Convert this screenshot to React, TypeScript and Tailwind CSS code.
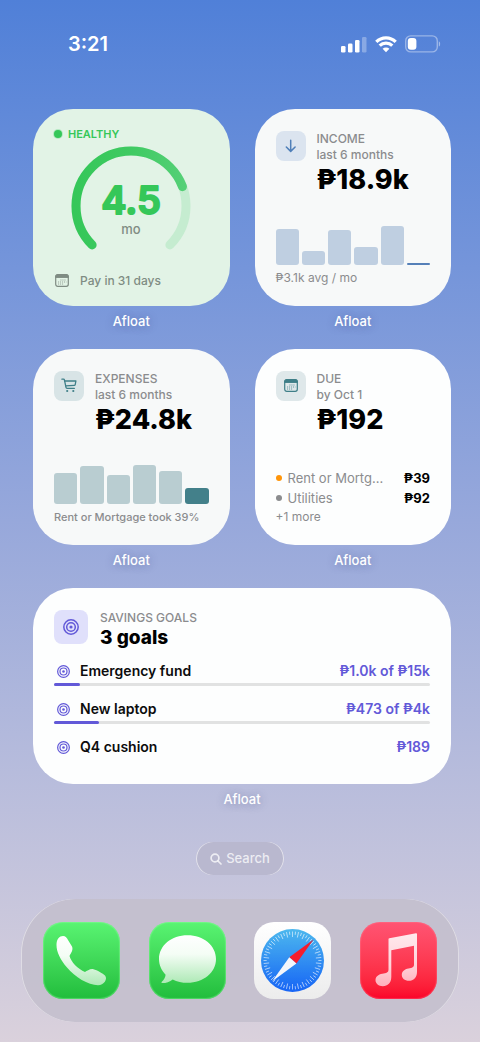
import React from "react";

type IconProps = { className?: string };

function SignalIcon() {
  return (
    <svg viewBox="0 0 26 17" className="h-[17px] w-[26px]" fill="#fff" aria-hidden="true">
      <rect x="0" y="10" width="4.5" height="6.5" rx="1.3" />
      <rect x="7" y="7.5" width="4.5" height="9" rx="1.3" />
      <rect x="14" y="4" width="4.5" height="12.5" rx="1.3" />
      <rect x="21" y="1" width="4.5" height="15.5" rx="1.3" opacity=".3" />
    </svg>
  );
}

function WifiIcon() {
  return (
    <svg viewBox="0 0 22 17" className="h-[17px] w-[22px]" fill="none" stroke="#fff" strokeWidth="3.2" aria-hidden="true">
      <path d="M1.300 5.900 A13.600 13.600 0 0 1 20.700 5.900" />
      <path d="M4.700 9.700 A8.900 8.900 0 0 1 17.300 9.700" />
      <path d="M11 16.200 L7.600 12.800 A4.800 4.800 0 0 1 14.400 12.800 Z" fill="#fff" stroke="none" />
    </svg>
  );
}

function BatteryIcon() {
  return (
    <svg viewBox="0 0 36 18" className="h-[18px] w-9" aria-hidden="true">
      <rect x=".7" y=".9" width="31.6" height="16" rx="5" fill="none" stroke="#fff" strokeOpacity=".4" strokeWidth="1.4" />
      <path d="M33.8 6.2 C35.6 6.8 35.6 11 33.8 11.6Z" fill="#fff" fillOpacity=".45" />
      <rect x="2.8" y="3" width="8.6" height="11.8" rx="3" fill="#fff" />
    </svg>
  );
}

function CalendarIcon({ className }: IconProps) {
  return (
    <svg viewBox="0 0 14 13" className={className} fill="none" stroke="currentColor" aria-hidden="true">
      <rect x=".7" y=".7" width="12.6" height="11.6" rx="2" strokeWidth="1.2" />
      <path d="M.7 3.4V2.7a2 2 0 0 1 2-2h8.6a2 2 0 0 1 2 2v.7z" fill="currentColor" strokeWidth="1" />
      <path d="M5.4 6h6M3 8h8.4M3 10h6" strokeWidth="1.1" strokeDasharray="1.1 .9" opacity=".75" />
    </svg>
  );
}

function ArrowDownIcon() {
  return (
    <svg viewBox="0 0 14 14" className="size-3.5" fill="none" stroke="#4f7fb8" strokeWidth="1.5" strokeLinecap="round" strokeLinejoin="round" aria-hidden="true">
      <path d="M6.700 1.300v11M2.300 8l4.400 4.400L11.100 8" />
    </svg>
  );
}

function CartIcon() {
  return (
    <svg viewBox="0 0 16 15" className="h-[15px] w-4" fill="none" stroke="#3f7f88" strokeWidth="1.3" strokeLinecap="round" strokeLinejoin="round" aria-hidden="true">
      <path d="M.9 1.200h1.600c.5 0 .8.200.9.700L5 9.400c.1.600.5.900 1 .9h7.400" />
      <path d="M3.700 3h11.200l-.7 3.600c-.1.500-.4.800-.9.800L4.700 7.900" />
      <circle cx="6.200" cy="13" r="1.100" fill="#3f7f88" stroke="none" />
      <circle cx="12.300" cy="13" r="1.100" fill="#3f7f88" stroke="none" />
    </svg>
  );
}

function TargetIcon({ className }: IconProps) {
  return (
    <svg viewBox="0 0 16 16" className={className} fill="none" stroke="#6259d8" strokeWidth="1.500" aria-hidden="true">
      <circle cx="8" cy="8" r="7.200" />
      <circle cx="8" cy="8" r="4.300" />
      <circle cx="8" cy="8" r="1.600" fill="#6259d8" stroke="none" />
    </svg>
  );
}

function Gauge() {
  const track = "M22.100 98.900 A55 55 0 1 1 99.900 98.900";
  return (
    <svg viewBox="0 0 122 108" className="h-[108px] w-[122px]" role="img" aria-label="4.5 months">
      <defs>
        <linearGradient id="gauge" x1="0" x2="1" y1="0" y2="0">
          <stop offset="0" stopColor="#35c759" />
          <stop offset=".5" stopColor="#3fca62" />
          <stop offset="1" stopColor="#55d077" />
        </linearGradient>
      </defs>
      <g fill="none" strokeWidth="9" strokeLinecap="round">
        <path d={track} stroke="#c5ecd0" />
        <path d={track} stroke="url(#gauge)" pathLength={100} strokeDasharray="75.700 100" />
      </g>
      <text x="61" y="68" textAnchor="middle" className="font-[Inter] text-[38px] font-semibold" fill="#35c759" stroke="#35c759" strokeWidth="2" strokeLinejoin="round">
        4.5
      </text>
      <text x="61" y="88" textAnchor="middle" className="font-[Inter] text-[13px] font-medium" fill="#7f8c83">
        mo
      </text>
    </svg>
  );
}

function Widget({ tone, wide, children }: { tone: string; wide?: boolean; children: React.ReactNode }) {
  return (
    <section className={wide ? "col-span-2" : ""}>
      <div className={`flex flex-col rounded-[40px] px-[21px] ${wide ? "min-h-[196px]" : "aspect-square"} ${tone}`}>{children}</div>
      <p className="mt-1 text-center text-[13px] leading-[22px] font-medium text-white [text-shadow:0_1px_8px_rgba(50,60,120,0.35)]">Afloat</p>
    </section>
  );
}

function StatHeader({ icon, tile, title, sub, amount }: { icon: React.ReactNode; tile: string; title: string; sub: string; amount: string }) {
  return (
    <div className="flex gap-[11px] pt-[22px]">
      <div className={`flex size-[30px] shrink-0 items-center justify-center rounded-lg ${tile}`}>{icon}</div>
      <div className="whitespace-nowrap">
        <h2 className="text-xs leading-4 font-medium text-[#8b8c8e]">{title}</h2>
        <p className="text-xs leading-4 font-medium text-[#8b8c8e]">{sub}</p>
        <p className="text-[27px] leading-[34px] font-extrabold text-black">{amount}</p>
      </div>
    </div>
  );
}

function Bars({ values, color, last }: { values: number[]; color: string; last: string }) {
  return (
    <div className="mt-auto flex h-10 items-end gap-[3px]">
      {values.map((v, i) => (
        <div key={i} className={`flex-1 ${i === values.length - 1 ? last : color} ${v < 4 ? "rounded-[1px]" : "rounded-[3px]"}`} style={{ height: v }} />
      ))}
    </div>
  );
}

function DueRow({ dot, name, amount }: { dot: string; name: string; amount: string }) {
  return (
    <li className="flex items-center leading-5">
      <span className={`mr-1.5 size-1.5 rounded-full ${dot}`} />
      <span className="flex-1 text-[13px] text-[#8b8c8e]">{name}</span>
      <span className="text-[13px] font-bold text-black">{amount}</span>
    </li>
  );
}

function Goal({ name, amount, progress }: { name: string; amount: string; progress?: number }) {
  return (
    <li>
      <div className="flex items-center pl-[3px] text-sm leading-5 font-semibold">
        <TargetIcon className="mr-2.5 size-[13px]" />
        <span className="flex-1 text-[#0c0c0d]">{name}</span>
        <span className="text-[#6259d8]">{amount}</span>
      </div>
      {progress !== undefined && (
        <div className="mt-0.5 h-[3px] rounded-full bg-[#e1e2e2]" role="progressbar" aria-label={name} aria-valuenow={progress} aria-valuemin={0} aria-valuemax={100}>
          <div className="h-full rounded-full bg-[#6259d8]" style={{ width: `${progress}%` }} />
        </div>
      )}
    </li>
  );
}

function AppButton({ label, tone, children }: { label: string; tone: string; children: React.ReactNode }) {
  return (
    <button type="button" aria-label={label} className={`size-[77px] overflow-hidden rounded-[20px] ${tone}`}>
      <svg viewBox="0 0 77 77" className="size-full" aria-hidden="true">
        {children}
      </svg>
    </button>
  );
}

function Dock() {
  const ticks = Array.from({ length: 60 }, (_, i) => i * 6);
  return (
    <nav className="mx-[21px] mt-6 flex justify-between rounded-[54px] bg-[#c3becc]/85 px-[22px] py-[23px] shadow-[inset_1px_0_0_rgba(255,255,255,0.45),inset_-1px_0_0_rgba(255,255,255,0.45)]">
      <AppButton label="Phone" tone="bg-linear-to-b from-[#59f472] to-[#20bd3c] shadow-[inset_0_0_1px_1px_rgba(150,255,165,0.4)]">
        <defs>
          <linearGradient id="glyph" x1="0" x2="0" y1="0" y2="1">
            <stop offset="0" stopColor="#fff" />
            <stop offset=".4" stopColor="#f4fdf5" />
            <stop offset="1" stopColor="#aee9b6" />
          </linearGradient>
        </defs>
        <path
          d="M20 14 C22.500 14 24 16 25 18 L29 24.500 C30.500 28 28 31 26.500 34 C28 40 35 47 42 50 C44 49 47 46.500 50.500 47.200 C54 48 60 51.500 62 53.500 C65 57 61 63.200 55 63.200 C45 63.200 32 55 24 45.500 C17.500 38 13.500 30 13.500 23 C13.500 17 16.500 14 20 14Z"
          fill="url(#glyph)"
        />
      </AppButton>
      <AppButton label="Messages" tone="bg-linear-to-b from-[#59f472] to-[#20bd3c] shadow-[inset_0_0_1px_1px_rgba(150,255,165,0.4)]">
        <path
          d="M38.500 13.200 C54.500 13.200 67 23.500 67 37 C67 50.500 54.500 60.800 38.500 60.800 C33 60.800 28 59.600 23.700 57.400 C21 59.800 17 61 13.300 61 C12.400 61 12.200 60.200 12.800 59.700 C15 57.700 16.300 55.500 16.600 52.700 C12.500 48.600 10 43.100 10 37 C10 23.500 22.500 13.200 38.500 13.200Z"
          fill="url(#glyph)"
        />
      </AppButton>
      <AppButton label="Safari" tone="bg-linear-to-b from-white to-[#ececec]">
        <defs>
          <linearGradient id="compass" x1="0" x2="0" y1="0" y2="1">
            <stop offset="0" stopColor="#4db8ee" />
            <stop offset="1" stopColor="#1765f5" />
          </linearGradient>
        </defs>
        <circle cx="38.500" cy="38.500" r="31.500" fill="url(#compass)" />
        <g stroke="#fff" strokeWidth=".8" opacity=".7">
          {ticks.map((a) => (
            <path key={a} d={a % 12 === 0 ? "M38.500 9.500v5.500" : "M38.500 9.500v3.200"} transform={`rotate(${a} 38.500 38.500)`} />
          ))}
        </g>
        <path d="M59.500 17.500 L42.400 41.500 L35.300 35.200Z" fill="#f51d2d" />
        <path d="M18 59.500 L35.300 35.200 L42.400 41.500Z" fill="#f4f6fb" />
      </AppButton>
      <AppButton label="Music" tone="bg-linear-to-b from-[#ff5473] to-[#fb0029] shadow-[inset_0_0_1px_1px_rgba(255,130,150,0.35)]">
        <defs>
          <linearGradient id="note" x1="0" x2="0" y1="0" y2="1">
            <stop offset="0" stopColor="#ffe9ed" />
            <stop offset=".6" stopColor="#ffd3da" />
            <stop offset="1" stopColor="#ffb0bc" />
          </linearGradient>
        </defs>
        <path
          d="M29.300 16.200 L56 11.200 C56.600 11.100 57 11.400 57 12 V50 C57 55.500 53.500 58.800 48.800 58.800 C44.800 58.800 41.800 56.300 41.800 53 C41.800 49.500 44.500 47.200 48.500 46.500 C52.300 45.800 54 45.300 54 42.500 V23.700 L31.300 28.200 V55 C31.300 61 27.700 64.200 22.800 64.200 C18.600 64.200 15.500 61.700 15.500 58.300 C15.500 54.800 18.300 52.500 22.300 51.800 C26.500 51.100 28.500 50.600 28.500 47.500 V17.200 C28.500 16.600 28.700 16.300 29.300 16.200Z"
          fill="url(#note)"
        />
      </AppButton>
    </nav>
  );
}

export default function App() {
  return (
    <main className="min-h-screen bg-linear-to-b from-[#5080d8] via-[#97a8db] to-[#dad1dc] pb-5 font-[Inter,sans-serif]">
      <header className="flex h-[109px] items-start justify-between pt-[30px] pr-[39px] pl-[68px]">
        <time className="text-xl leading-7 font-semibold text-white">3:21</time>
        <div className="flex h-7 items-center gap-2">
          <SignalIcon />
          <WifiIcon />
          <BatteryIcon />
        </div>
      </header>

      <div className="grid grid-cols-2 gap-x-[25px] gap-y-[17px] pr-[29px] pl-[33px]">
        <Widget tone="bg-[#e2f3e6]">
          <h2 className="flex items-center gap-1.5 pt-[17px] text-[11px] leading-4 font-semibold text-[#35c759]">
            <span className="size-2 rounded-full bg-[#35c759] shadow-[0_0_0_1px_#b5e8c2]" />
            HEALTHY
          </h2>
          <div className="mt-1 flex justify-center">
            <Gauge />
          </div>
          <p className="mt-auto flex items-center gap-[11px] pb-[17px] pl-px text-xs leading-4 font-medium text-[#7f8c83]">
            <CalendarIcon className="h-[13px] w-3.5" />
            Pay in 31 days
          </p>
        </Widget>

        <Widget tone="bg-[#f7f9f9]">
          <StatHeader icon={<ArrowDownIcon />} tile="bg-[#dbe4ef]" title="INCOME" sub="last 6 months" amount="₱18.9k" />
          <Bars values={[36, 14, 35, 18, 39, 2]} color="bg-[#bfcfe1]" last="bg-[#5580b8]" />
          <p className="pt-[5px] pb-5 text-xs leading-4 text-[#8b8c8e]">₱3.1k avg / mo</p>
        </Widget>

        <Widget tone="bg-[#f7f9f9]">
          <StatHeader icon={<CartIcon />} tile="bg-[#d8e4e6]" title="EXPENSES" sub="last 6 months" amount="₱24.8k" />
          <Bars values={[31, 38, 29, 39, 33, 16]} color="bg-[#b9cdd1]" last="bg-[#43808a]" />
          <p className="pt-[5px] pb-5 text-[11px] leading-4 font-medium whitespace-nowrap text-[#8b8c8e]">Rent or Mortgage took 39%</p>
        </Widget>

        <Widget tone="bg-[#fdfefe]">
          <StatHeader icon={<CalendarIcon className="h-[13px] w-3.5 text-[#3f7f88]" />} tile="bg-[#dfe8ea]" title="DUE" sub="by Oct 1" amount="₱192" />
          <ul className="mt-auto">
            <DueRow dot="bg-[#ff9509]" name="Rent or Mortg..." amount="₱39" />
            <DueRow dot="bg-[#8b8c8e]" name="Utilities" amount="₱92" />
          </ul>
          <p className="pt-px pb-5 text-xs leading-4 text-[#8b8c8e]">+1 more</p>
        </Widget>

        <Widget tone="bg-[#fdfefe]" wide>
          <div className="flex gap-3 pt-[22px]">
            <div className="flex size-[34px] items-center justify-center rounded-lg bg-[#e0e0fb]">
              <TargetIcon className="size-4" />
            </div>
            <div>
              <h2 className="text-xs leading-4 font-medium text-[#8b8c8e]">SAVINGS GOALS</h2>
              <p className="text-[19px] leading-6 font-extrabold text-black">3 goals</p>
            </div>
          </div>
          <ul className="mt-[11px] flex flex-col gap-[13px]">
            <Goal name="Emergency fund" amount="₱1.0k of ₱15k" progress={7} />
            <Goal name="New laptop" amount="₱473 of ₱4k" progress={12} />
            <Goal name="Q4 cushion" amount="₱189" />
          </ul>
        </Widget>
      </div>

      <button type="button" className="mx-auto mt-8 flex h-[33px] items-center gap-1 rounded-full bg-[#b9b8cf] px-3.5 text-[13px] font-medium text-white/75 shadow-[inset_1px_0_0_rgba(255,255,255,0.6),inset_-1px_0_0_rgba(255,255,255,0.6)]">
        <svg viewBox="0 0 12 12" className="size-3" fill="none" stroke="currentColor" strokeWidth="1.7" strokeLinecap="round" aria-hidden="true">
          <circle cx="5" cy="5" r="3.900" />
          <path d="M8 8l3 3" />
        </svg>
        Search
      </button>

      <Dock />
    </main>
  );
}
